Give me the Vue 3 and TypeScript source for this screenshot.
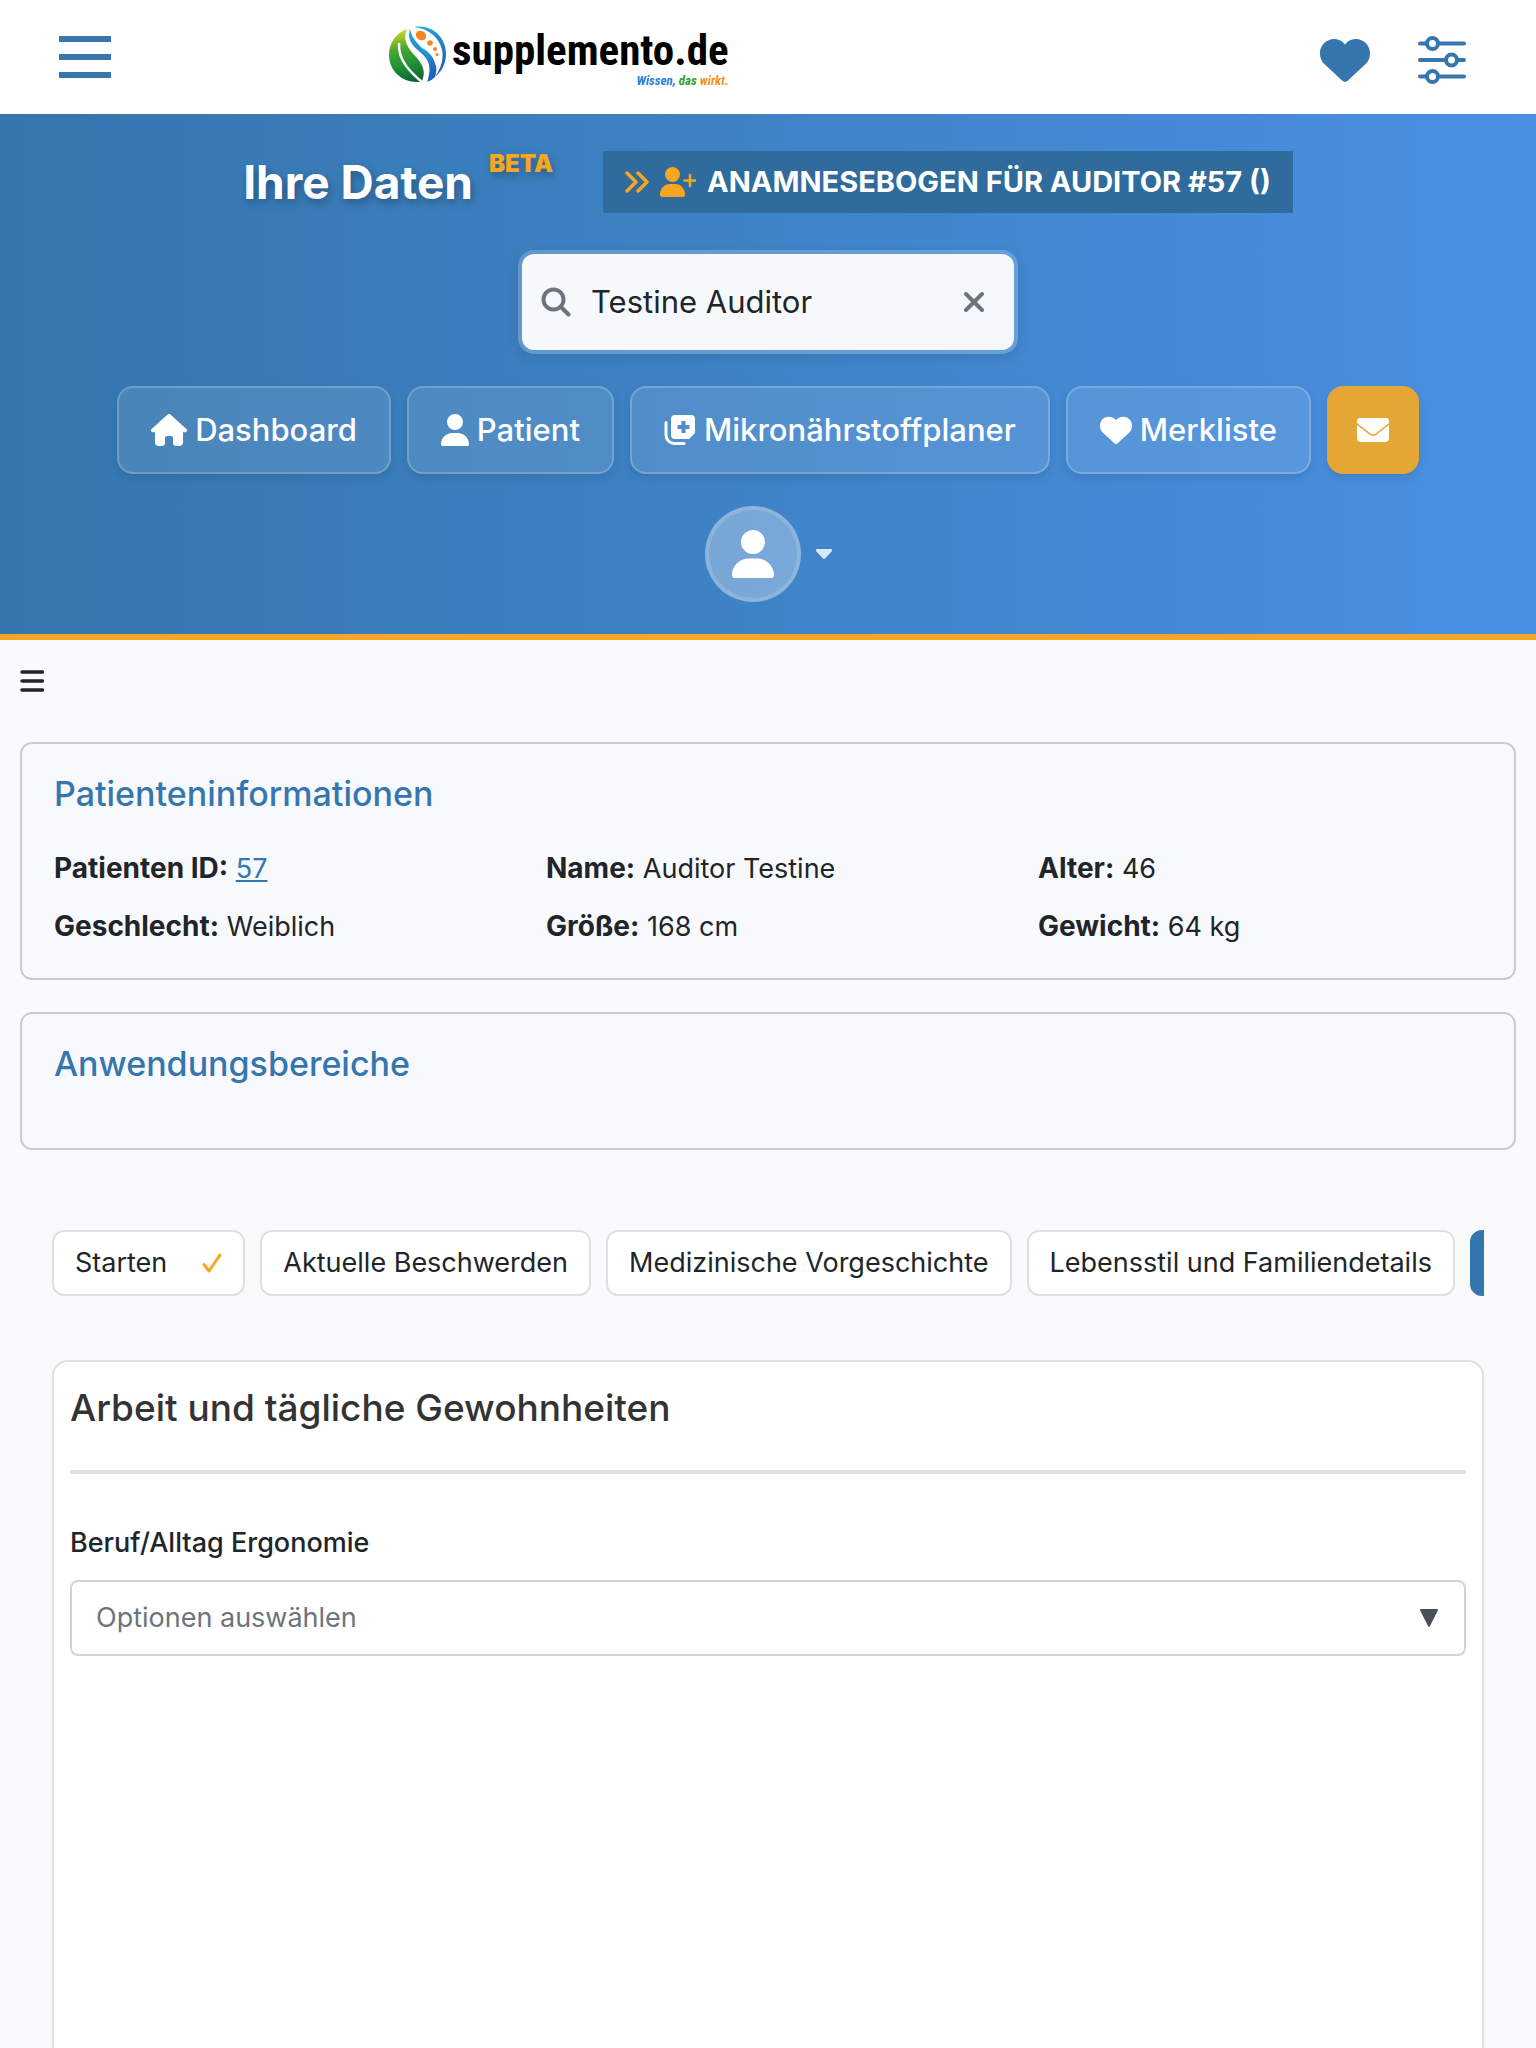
<script setup lang="ts">
import { ref } from 'vue'

interface Fact {
  label: string
  value: string
  link?: boolean
}

interface Step {
  label: string
  done?: boolean
  active?: boolean
}

const search = ref('Testine Auditor')
const ergonomics = ref('')

const facts: Fact[] = [
  { label: 'Patienten ID:', value: '57', link: true },
  { label: 'Name:', value: 'Auditor Testine' },
  { label: 'Alter:', value: '46' },
  { label: 'Geschlecht:', value: 'Weiblich' },
  { label: 'Größe:', value: '168 cm' },
  { label: 'Gewicht:', value: '64 kg' },
]

const steps: Step[] = [
  { label: 'Starten', done: true },
  { label: 'Aktuelle Beschwerden' },
  { label: 'Medizinische Vorgeschichte' },
  { label: 'Lebensstil und Familiendetails' },
  { label: '', active: true },
]

const heartPath =
  'M47.6 300.4L228.3 469.1c7.5 7 17.4 10.9 27.7 10.9s20.2-3.9 27.7-10.9L464.4 300.4c30.4-28.3 47.6-68 47.6-109.5v-5.8c0-69.9-50.5-129.5-119.4-141C347 36.5 300.6 51.4 268 84L256 96 244 84c-32.6-32.6-79-47.5-124.6-39.9C50.5 55.6 0 115.2 0 185.1v5.8c0 41.5 17.2 81.2 47.6 109.5z'
const userPath =
  'M224 256A128 128 0 1 0 224 0a128 128 0 1 0 0 256zm-45.7 48C79.8 304 0 383.8 0 482.3C0 498.7 13.3 512 29.7 512H418.3c16.4 0 29.7-13.3 29.7-29.7C448 383.8 368.2 304 269.7 304H178.3z'
</script>

<template>
  <div class="page">
    <header class="topbar">
      <button class="plain" type="button" aria-label="Menü">
        <svg width="54" height="46" viewBox="0 0 54 46" fill="#3476ad">
          <rect x="1" y="2" width="52" height="6" /><rect x="1" y="20" width="52" height="6" /><rect x="1" y="38" width="52" height="6" />
        </svg>
      </button>
      <a class="logo" href="#" aria-label="supplemento.de">
        <svg width="58" height="58" viewBox="0 0 58 58">
          <defs>
            <linearGradient id="leaf" gradientUnits="userSpaceOnUse" x1="18" y1="2" x2="30" y2="56">
              <stop offset="0" stop-color="#d3da28" /><stop offset="0.35" stop-color="#4aa62f" />
              <stop offset="0.65" stop-color="#219237" /><stop offset="1" stop-color="#0c5f31" />
            </linearGradient>
            <linearGradient id="water" x1="0" y1="0" x2="0.4" y2="1">
              <stop offset="0" stop-color="#2ea9df" /><stop offset="1" stop-color="#1c63bd" />
            </linearGradient>
          </defs>
          <path fill="url(#leaf)" d="M19 3C8 7 1 17 1 29c0 15 12 27 28 27 2 0 4 0 5-1 4-9 1-16-5-23C20 23 14 14 19 3z" />
          <path fill="none" stroke="#fff" stroke-width="2.500" d="M11 17c-1 17 10 28 24 40" />
          <path fill="url(#water)" d="M22 3c-3 9 1 16 10 23 9 8 14 16 7 30 3-1 6-3 8-5 4-11-1-18-9-25-8-8-14-13-16-23z" />
          <path fill="url(#water)" d="M26 1c18-3 32 10 32 27 0 10-5 18-11 23 6-9 9-18 7-27C51 11 41 3 26 1z" />
          <path fill="url(#water)" d="M31 20c6 4 15 8 16 19 0 4-1 8-2 11l-5 3c4-13 0-20-9-33z" />
          <g fill="#f5871f">
            <ellipse cx="33" cy="9.500" rx="5.500" ry="4.500" transform="rotate(30 33 9.500)" />
            <circle cx="42" cy="17" r="2.800" /><circle cx="47" cy="23" r="2" /><circle cx="49" cy="28.500" r="1.600" />
          </g>
        </svg>
        <span class="wordmark">
          <span class="brand">supplemento.de</span>
          <span class="claim"><i class="c1">Wissen, </i><i class="c2">das </i><i class="c3">wirkt.</i></span>
        </span>
      </a>
      <div class="top-actions">
        <button class="plain" type="button" aria-label="Merkliste">
          <svg width="50" height="50" viewBox="0 0 512 512" fill="#3476ad"><path :d="heartPath" /></svg>
        </button>
        <button class="plain" type="button" aria-label="Filter">
          <svg width="48" height="48" viewBox="0 0 48 48" fill="none" stroke="#3476ad" stroke-width="4" stroke-linecap="round">
            <path d="M2 7.500h6M22 7.500h24M2 24h24M40 24h6M2 40.500h6M22 40.500h24" />
            <circle cx="14.500" cy="7.500" r="5.500" /><circle cx="33.500" cy="24" r="5.500" /><circle cx="14.500" cy="40.500" r="5.500" />
          </svg>
        </button>
      </div>
    </header>

    <section class="hero">
      <div class="title-row">
        <h1>Ihre Daten <sup>BETA</sup></h1>
        <a class="form-link" href="#">
          <svg width="24" height="22" viewBox="0 0 24 22" fill="none" stroke="#f5a623" stroke-width="3.500" stroke-linecap="round" stroke-linejoin="round">
            <path d="M2 2l9 9-9 9M13 2l9 9-9 9" />
          </svg>
          <svg width="36" height="30" viewBox="0 0 36 30" fill="#f5a623">
            <circle cx="12.500" cy="7.500" r="7.500" />
            <path d="M10 17h5c6 0 10 5 10 10.500 0 1.500-.5 2.500-2 2.500H2c-1.500 0-2-1-2-2.500C0 22 4 17 10 17z" />
            <path d="M30 8v11M24.500 13.500h11" stroke="#f5a623" stroke-width="2.600" stroke-linecap="round" />
          </svg>
          <span>ANAMNESEBOGEN FÜR AUDITOR #57 ()</span>
        </a>
      </div>

      <label class="search">
        <svg width="30" height="30" viewBox="0 0 30 30" fill="none" stroke="#6c757d" stroke-width="4" stroke-linecap="round">
          <circle cx="12.500" cy="12.500" r="10" /><path d="M20 20l7.500 7.500" />
        </svg>
        <input v-model="search" type="text" aria-label="Patient suchen" />
        <button class="plain" type="button" aria-label="Suche leeren" @click="search = ''">
          <svg width="20" height="20" viewBox="0 0 20 20" stroke="#6c757d" stroke-width="4" stroke-linecap="round">
            <path d="M2 2l16 16M18 2L2 18" />
          </svg>
        </button>
      </label>

      <nav class="nav">
        <a class="tile" href="#">
          <svg width="36" height="32" viewBox="0 0 36 32" fill="#fff">
            <path d="M16.600.6a2 2 0 0 1 2.800 0l16 14.500c1.200 1.200.5 3.200-1.200 3.200H32V28a4 4 0 0 1-4 4h-2.500a3.500 3.500 0 0 1-3.500-3.500V24a2 2 0 0 0-2-2h-4a2 2 0 0 0-2 2v4.500a3.500 3.500 0 0 1-3.500 3.500H8a4 4 0 0 1-4-4v-9.700H1.800C.1 18.300-.6 16.300.6 15.100z" />
          </svg>
          <span>Dashboard</span>
        </a>
        <a class="tile" href="#">
          <svg width="28" height="32" viewBox="0 0 448 512" fill="#fff"><path :d="userPath" /></svg>
          <span>Patient</span>
        </a>
        <a class="tile" href="#">
          <svg width="32" height="32" viewBox="0 0 32 32" fill="none">
            <path fill="#fff" fill-rule="evenodd" d="M11 1h16a4 4 0 0 1 4 4v14l-6 6H11a4 4 0 0 1-4-4V5a4 4 0 0 1 4-4zm6.500 6v4h-4v4h4v4h4v-4h4v-4h-4V7z" />
            <path stroke="#fff" stroke-width="3" stroke-linecap="round" d="M2 8.500V21a8.500 8.500 0 0 0 8.500 8.500H20" />
          </svg>
          <span>Mikronährstoffplaner</span>
        </a>
        <a class="tile" href="#">
          <svg width="32" height="32" viewBox="0 0 512 512" fill="#fff"><path :d="heartPath" /></svg>
          <span>Merkliste</span>
        </a>
        <a class="tile mail" href="#" aria-label="Nachrichten">
          <svg width="32" height="24" viewBox="0 0 32 24" fill="#fff">
            <path d="M3 0h26a3 3 0 0 1 3 3v2L18.500 15.500a4 4 0 0 1-5 0L0 5V3a3 3 0 0 1 3-3z" />
            <path d="M0 7l13 10a5 5 0 0 0 6 0L32 7v13a4 4 0 0 1-4 4H4a4 4 0 0 1-4-4z" />
          </svg>
        </a>
      </nav>

      <button class="account plain" type="button" aria-label="Konto">
        <span class="avatar">
          <svg width="42" height="48" viewBox="0 0 448 512" fill="#fff"><path :d="userPath" /></svg>
        </span>
        <svg width="16" height="10" viewBox="0 0 16 10" fill="#dce8f5">
          <path d="M1.500 0h13C16 0 16.500 1.600 15.500 2.600l-6.200 6.600a1.800 1.800 0 0 1-2.600 0L.5 2.600C-.5 1.600 0 0 1.500 0z" />
        </svg>
      </button>
    </section>

    <main class="content">
      <button class="plain side-toggle" type="button" aria-label="Seitenmenü">
        <svg width="24" height="22" viewBox="0 0 24 22" stroke="#212529" stroke-width="3.500" stroke-linecap="round">
          <path d="M2 2h20.500M2 11h20.500M2 20h20.500" />
        </svg>
      </button>

      <section class="panel">
        <h2>Patienteninformationen</h2>
        <div class="facts">
          <div v-for="fact in facts" :key="fact.label">
            <strong>{{ fact.label }}</strong>&nbsp;<a v-if="fact.link" href="#">{{ fact.value }}</a><span v-else>{{ fact.value }}</span>
          </div>
        </div>
      </section>

      <section class="panel areas">
        <h2>Anwendungsbereiche</h2>
      </section>

      <div class="form">
        <div class="steps">
          <button v-for="(step, i) in steps" :key="i" type="button" class="step" :class="{ active: step.active }" :aria-label="step.label || 'Aktueller Schritt'">
            {{ step.label }}
            <svg v-if="step.done" width="20" height="20" viewBox="0 0 20 20" fill="none" stroke="#f5a623" stroke-width="3" stroke-linecap="round" stroke-linejoin="round">
              <path d="M2 11.500l5 6.500L18 2" />
            </svg>
          </button>
        </div>

        <section class="card">
          <h3>Arbeit und tägliche Gewohnheiten</h3>
          <hr />
          <label for="ergonomics">Beruf/Alltag Ergonomie</label>
          <div class="select">
            <select id="ergonomics" v-model="ergonomics">
              <option value="">Optionen auswählen</option>
            </select>
            <svg width="18" height="18" viewBox="0 0 18 18" fill="#495057">
              <path d="M1 0h16q1.500 0 .8 1.500L10 17q-1 2-2 0L.2 1.500Q-.5 0 1 0z" />
            </svg>
          </div>
        </section>
      </div>
    </main>
  </div>
</template>

<style>
body {
  margin: 0;
  background: #f9fafc;
}
</style>

<style scoped>
* {
  box-sizing: border-box;
}

.page {
  display: flex;
  flex-direction: column;
  min-height: 100vh;
  font-family: Inter, "Liberation Sans", sans-serif;
  font-size: 27px;
  line-height: 42px;
  color: #212529;
  background: #f9fafc;
}

svg {
  display: block;
  flex: none;
}

.plain {
  padding: 0;
  border: 0;
  background: none;
  cursor: pointer;
}

.topbar {
  display: grid;
  grid-template-columns: 330px 1fr auto;
  align-items: center;
  height: 114px;
  padding: 0 70px 0 58px;
  background: #fff;
}

.logo {
  display: flex;
  align-items: flex-start;
  gap: 6px;
  color: #000;
  text-decoration: none;
}

.wordmark {
  display: flex;
  flex-direction: column;
}

.brand {
  font-family: "Roboto Condensed", "Liberation Sans Narrow", "Liberation Sans", sans-serif;
  font-weight: 700;
  font-size: 43px;
  line-height: 48px;
}

.claim {
  align-self: flex-end;
  font-family: "Roboto Condensed", "Liberation Sans Narrow", "Liberation Sans", sans-serif;
  font-weight: 700;
  font-size: 13px;
  line-height: 14px;
  white-space: pre;
}

.c1 { color: #2a83dc; }
.c2 { color: #2f9e2f; }
.c3 { color: #f5921f; }

.top-actions {
  display: flex;
  align-items: center;
  gap: 48px;
  padding-top: 6px;
}

.hero {
  display: flex;
  flex-direction: column;
  align-items: center;
  gap: 32px;
  padding: 32px 20px;
  border-bottom: 6px solid #f5a623;
  background: linear-gradient(90deg, #3476ad, #4a90e2);
  color: #fff;
}

.title-row {
  display: flex;
  align-items: center;
  gap: 50px;
  height: 72px;
}

h1 {
  display: flex;
  gap: 16px;
  margin: 0;
  font-size: 46px;
  line-height: 72px;
  font-weight: 700;
  text-shadow: 2px 4px 8px rgba(0, 0, 0, 0.3);
}

sup {
  font-size: 24px;
  line-height: 36px;
  font-weight: 900;
  color: #f5a623;
}

.form-link {
  display: flex;
  align-items: center;
  gap: 11px;
  height: 62px;
  padding: 0 22px;
  background: #2f6b9d;
  color: #fff;
  font-size: 29px;
  font-weight: 700;
  text-decoration: none;
}

.search {
  display: flex;
  align-items: center;
  gap: 20px;
  width: 500px;
  height: 104px;
  padding: 0 30px 0 19px;
  border: 4px solid rgba(255, 255, 255, 0.2);
  border-radius: 16px;
  background: rgba(255, 255, 255, 0.95) padding-box;
  box-shadow: 0 4px 12px rgba(0, 0, 0, 0.1);
}

.search input {
  flex: 1;
  min-width: 0;
  padding: 0;
  border: 0;
  outline: 0;
  background: none;
  font: 400 31px/48px Inter, "Liberation Sans", sans-serif;
  color: #212529;
}

.nav {
  display: flex;
  gap: 16px;
}

.tile {
  display: flex;
  align-items: center;
  gap: 8px;
  height: 88px;
  padding: 0 32px;
  border: 2px solid rgba(255, 255, 255, 0.2);
  border-radius: 16px;
  background: rgba(255, 255, 255, 0.1);
  box-shadow: 0 4px 8px rgba(0, 0, 0, 0.1);
  color: #fff;
  font-size: 31px;
  font-weight: 500;
  text-decoration: none;
}

.tile.mail {
  width: 92px;
  justify-content: center;
  padding: 0;
  border: 0;
  background: #e4a735;
}

.account {
  display: flex;
  align-items: center;
  gap: 15px;
}

.avatar {
  display: flex;
  align-items: center;
  justify-content: center;
  width: 96px;
  height: 96px;
  border: 4px solid rgba(255, 255, 255, 0.15);
  border-radius: 50%;
  background: rgba(255, 255, 255, 0.3);
}

.content {
  display: flex;
  flex: 1;
  flex-direction: column;
  padding: 0 20px;
}

.side-toggle {
  align-self: flex-start;
  margin: 30px 0 50px;
}

.panel {
  height: 238px;
  margin-bottom: 32px;
  padding: 28px 32px;
  border: 2px solid #c9cccf;
  border-radius: 12px;
  background: #f8f9fc;
}

.panel.areas {
  height: 138px;
  margin-bottom: 80px;
}

h2 {
  margin: 0 0 32px;
  font-size: 34px;
  line-height: 44px;
  font-weight: 500;
  color: #3476ad;
}

.facts {
  display: grid;
  grid-template-columns: repeat(3, 1fr);
  gap: 16px 48px;
}

.facts strong {
  font-size: 28px;
  line-height: 28px;
}

.facts a {
  color: #3476ad;
}

.form {
  display: flex;
  flex: 1;
  flex-direction: column;
  padding: 0 32px;
}

.steps {
  display: flex;
  gap: 15px;
  margin-bottom: 64px;
  overflow: hidden;
}

.step {
  display: flex;
  flex: none;
  align-items: center;
  gap: 35px;
  height: 66px;
  padding: 0 21px;
  border: 2px solid #e0e0e0;
  border-radius: 12px;
  background: #fff;
  color: #212529;
  font: inherit;
  white-space: nowrap;
}

.step.active {
  width: 200px;
  border-color: #3476ad;
  background: #3476ad;
}

.card {
  flex: 1;
  padding: 16px;
  border: 2px solid #e0e0e0;
  border-bottom: 0;
  border-radius: 16px 16px 0 0;
  background: #fff;
  box-shadow: 0 4px 8px rgba(0, 0, 0, 0.05);
}

h3 {
  margin: 0;
  font-size: 37px;
  line-height: 60px;
  font-weight: 500;
  color: #333;
}

hr {
  height: 4px;
  margin: 32px 0 48px;
  border: 0;
  background: #e0e0e0;
}

.card label {
  display: block;
  margin-bottom: 16px;
  font-weight: 500;
}

.select {
  display: grid;
  align-items: center;
}

.select select,
.select svg {
  grid-area: 1 / 1;
}

.select svg {
  justify-self: end;
  margin-right: 28px;
  pointer-events: none;
}

select {
  width: 100%;
  height: 76px;
  padding: 0 24px;
  border: 2px solid #ced4da;
  border-radius: 8px;
  appearance: none;
  background: #fff;
  color: #6c757d;
  font: inherit;
}
</style>
